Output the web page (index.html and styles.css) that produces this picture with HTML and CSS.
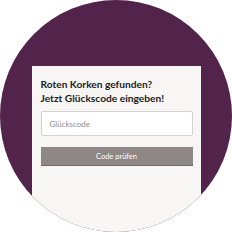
FILE: index.html
```html
<!DOCTYPE html>
<html lang="de">
<head>
<meta charset="utf-8">
<link rel="stylesheet" href="styles.css">
</head>
<body>
<div class="circle">
  <div class="card">
    <h1 class="title">Roten Korken gefunden?<br>Jetzt Glückscode eingeben!</h1>
    <div class="input"><span class="placeholder">Glückscode</span></div>
    <div class="button">Code prüfen</div>
  </div>
</div>
</body>
</html>
```

FILE: styles.css
```css
html, body {
  margin: 0;
  padding: 0;
  background: #ffffff;
}
.circle {
  width: 232px;
  height: 232px;
  border-radius: 50%;
  overflow: hidden;
  background: #52234b;
  display: flex;
  justify-content: center;
  padding-top: 66px;
  box-sizing: border-box;
}
.card {
  width: 169px;
  box-sizing: border-box;
  background: #f7f6f4;
  padding: 11px 8px 0 9px;
  display: flex;
  flex-direction: column;
}
.title {
  margin: 0;
  font-family: "Lato", sans-serif;
  font-weight: 700;
  font-size: 10.2px;
  line-height: 14px;
  color: #1b1b1b;
}
.input {
  margin-top: 6px;
  height: 25px;
  box-sizing: border-box;
  background: #ffffff;
  border: 1px solid #d5d3d1;
  border-radius: 2px;
  display: flex;
  align-items: center;
  padding-left: 8px;
}
.placeholder {
  font-family: "Lato", sans-serif;
  font-size: 8px;
  color: #8f8c8a;
}
.button {
  margin-top: 11px;
  height: 19px;
  box-sizing: border-box;
  background: #8e8786;
  border-bottom: 1px solid #6f6968;
  display: flex;
  align-items: center;
  justify-content: center;
  font-family: "Lato", sans-serif;
  font-size: 7.5px;
  color: #ffffff;
}
```
